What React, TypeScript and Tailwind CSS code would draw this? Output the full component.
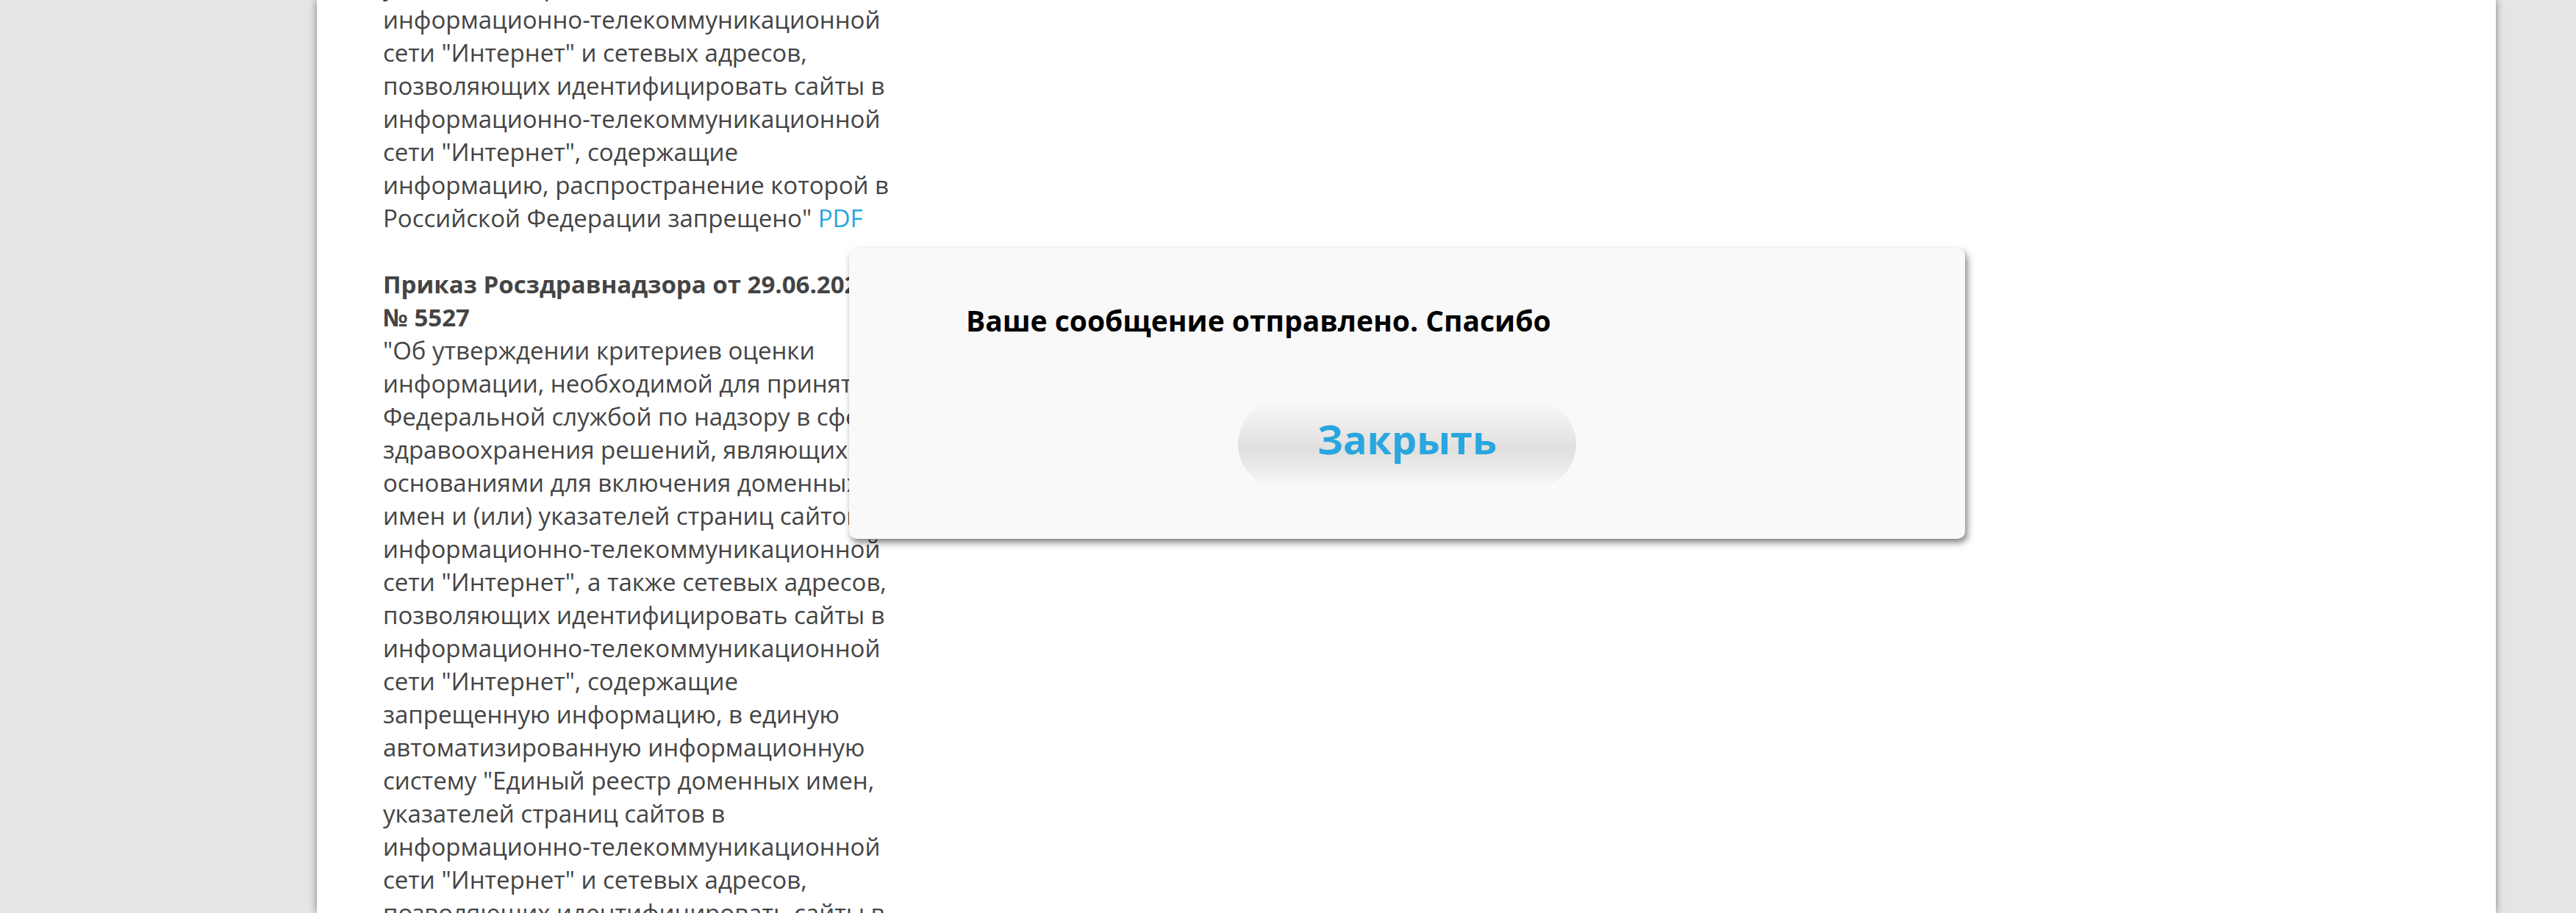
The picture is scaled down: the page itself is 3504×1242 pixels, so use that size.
import React from "react";

const para1 = [
  "указателей страниц сайтов в",
  "информационно-телекоммуникационной",
  "сети \"Интернет\" и сетевых адресов,",
  "позволяющих идентифицировать сайты в",
  "информационно-телекоммуникационной",
  "сети \"Интернет\", содержащие",
  "информацию, распространение которой в",
];

const para2 = [
  "\"Об утверждении критериев оценки",
  "информации, необходимой для принятия",
  "Федеральной службой по надзору в сфере",
  "здравоохранения решений, являющихся",
  "основаниями для включения доменных",
  "имен и (или) указателей страниц сайтов в",
  "информационно-телекоммуникационной",
  "сети \"Интернет\", а также сетевых адресов,",
  "позволяющих идентифицировать сайты в",
  "информационно-телекоммуникационной",
  "сети \"Интернет\", содержащие",
  "запрещенную информацию, в единую",
  "автоматизированную информационную",
  "систему \"Единый реестр доменных имен,",
  "указателей страниц сайтов в",
  "информационно-телекоммуникационной",
  "сети \"Интернет\" и сетевых адресов,",
  "позволяющих идентифицировать сайты в",
  "информационно-телекоммуникационной",
  "сети \"Интернет\", содержащие",
];

export default function App() {
  return (
    <div
      className="relative h-[1242px] w-[3504px] overflow-hidden bg-[#e5e5e5]"
      style={{ fontFamily: '"Open Sans", "Noto Sans", sans-serif' }}
    >
      <div className="ml-[431px] flex h-[1242px] w-[2964px] flex-col overflow-hidden bg-white shadow-[0_0_10px_rgba(0,0,0,0.45)]">
        <div className="mt-[-41px] pl-[90px] text-[33px] leading-[45px] text-[#444444]">
          <div className="whitespace-nowrap">
            {para1.map((l, i) => (
              <div key={i}>{l}</div>
            ))}
            <div>
              Российской Федерации запрещено"{" "}
              <a className="text-[#29a6df]">PDF</a>
            </div>
          </div>
          <div className="mt-[45px] whitespace-nowrap">
            <div className="font-bold">Приказ Росздравнадзора от 29.06.2020</div>
            <div className="font-bold">№ 5527</div>
            {para2.map((l, i) => (
              <div key={i}>{l}</div>
            ))}
          </div>
        </div>
      </div>

      <div className="absolute left-[1155px] top-[338px] flex h-[395px] w-[1518px] flex-col rounded-[10px] bg-[#f9f9f9] shadow-[3px_5px_10px_rgba(0,0,0,0.5)]">
        <div className="pl-[159px] pt-[70px] text-[39px] font-bold leading-[56px] text-black">
          Ваше сообщение отправлено. Спасибо
        </div>
        <button className="mx-auto mt-[80px] flex h-[120px] w-[460px] items-center justify-center rounded-full bg-[linear-gradient(to_bottom,#f8f8f8_0%,#efeeed_25%,#e1e0de_55%,#ecebea_78%,#f9f9f9_100%)] pb-[14px] text-[54px] font-bold text-[#29a6df]">
          Закрыть
        </button>
      </div>
    </div>
  );
}
